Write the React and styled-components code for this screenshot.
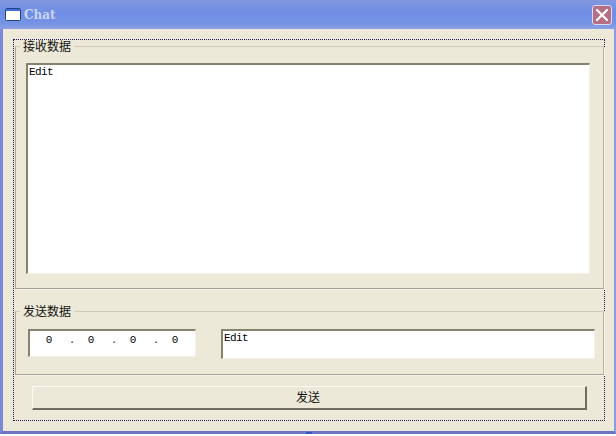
import React from 'react';
import styled, { createGlobalStyle } from 'styled-components';

const GlobalStyle = createGlobalStyle`
  html, body { margin: 0; padding: 0; background: #fff; }
  * { box-sizing: border-box; }
`
const Window = styled.div`
  position: relative;
  width: 616px;
  height: 434px;
  display: flex;
  flex-direction: column;
  background: #ece9d8;
  border-left: 3px solid #7b88d8;
  border-right: 2px solid #8a9be0;
  border-bottom: 3px solid #6d74c4;
  font-family: "Noto Sans CJK SC", "Liberation Sans", sans-serif;
  font-size: 12px;
  color: #111;
`
const TitleBar = styled.div`
  flex: none;
  height: 29px;
  margin: 0 -2px 0 -3px;
  padding: 0 4px 0 5px;
  display: flex;
  align-items: center;
  gap: 3px;
  background: linear-gradient(180deg, #8497dc 0%, #7c95e2 12%, #6f8de4 45%, #7593e4 80%, #8ba0e4 100%);
`
const TitleText = styled.span`
  flex: 1;
  font-family: "DejaVu Serif", serif;
  font-weight: 700;
  font-size: 12px;
  color: #c9d6f5;
`
const CloseButton = styled.button`
  width: 20px;
  height: 20px;
  padding: 0;
  display: flex;
  align-items: center;
  justify-content: center;
  background: #b56f84;
  border: 1px solid #d8dcf0;
  border-radius: 3px;
`
const Body = styled.div`
  flex: 1;
  padding: 10px 8px 0 10px;
`
const Frame = styled.div`
  width: 592px;
  height: 382px;
  padding: 0 0 0 1px;
  border: 1px dotted #1a1a50;
`
const Group = styled.fieldset`
  margin: ${p => p.$top || 0}px 0 0 0;
  padding: 0;
  width: 589px;
  border: 1px solid #d0cdbc;
  border-bottom-color: #a3a190;
  border-right-color: #b5b3a2;
  border-left-color: #a8a696;
  box-shadow: 1px 1px 0 #f5f4ec;
`
const Legend = styled.legend`
  margin-left: 4px;
  padding: 0 3px;
  font-size: 12px;
  line-height: 12px;
  font-weight: 400;
`
const GroupBody = styled.div`
  padding: ${p => p.$padding};
`
const Sunken = styled.div`
  background: #fff;
  border-style: solid;
  border-width: 2px 1px 1px 2px;
  border-color: #85826f #f4f2e8 #f4f2e8 #85826f;
`
const EditBox = styled(Sunken)`
  height: ${p => p.$height}px;
  flex: ${p => p.$grow ? 1 : 'none'};
  padding: 1px 1px 0;
  font-family: "Liberation Mono", monospace;
  font-size: 11px;
  letter-spacing: -0.6px;
  line-height: 12px;
  color: #000;
`
const SendRow = styled.div`
  display: flex;
  align-items: flex-start;
  gap: 25px;
`
const IpBox = styled(Sunken)`
  width: 168px;
  height: 28px;
  flex: none;
  display: flex;
  align-items: center;
  padding: 0 0 7px 7px;
  font-family: "Liberation Mono", monospace;
  font-size: 11px;
  color: #000;
`
const Octet = styled.span`
  width: 24px;
  text-align: center;
`
const Dot = styled.span`
  width: 18px;
  padding-left: 4px;
  text-align: center;
  color: #333;
`
const SendButton = styled.button`
  display: block;
  width: 555px;
  height: 24px;
  margin: 11px 0 0 17px;
  padding: 0 2px 2px 0;
  background: #ece9d8;
  border-style: solid;
  border-width: 1px 2px 2px 1px;
  border-color: #fbfaf4 #6f6d60 #6f6d60 #fbfaf4;
  font-family: "Noto Sans CJK SC", sans-serif;
  font-size: 12px;
  color: #111;
`
const SizeGrip = styled.div`
  position: absolute;
  left: 303px;
  bottom: -5px;
  z-index: 2;
  width: 6px;
  height: 4px;
  background: #3557c4;
`

const octets = [0, 0, 0, 0];

function App() {
  return (
    <Window>
      <GlobalStyle />
      <TitleBar>
        <svg width="16" height="13" viewBox="0 0 16 13">
          <rect x="0.5" y="0.5" width="15" height="12" rx="1" fill="#fff" stroke="#24408c" />
          <rect x="1" y="1" width="14" height="2" fill="#3f6fd8" />
        </svg>
        <TitleText>Chat</TitleText>
        <CloseButton aria-label="close">
          <svg width="14" height="14" viewBox="0 0 14 14">
            <path d="M2 2 L12 12 M12 2 L2 12" stroke="#fff" strokeWidth="2.2" strokeLinecap="round" />
          </svg>
        </CloseButton>
      </TitleBar>
      <Body>
        <Frame>
          <Group>
            <Legend>接收数据</Legend>
            <GroupBody $padding="11px 13px 14px 10px">
              <EditBox $height={211}>Edit</EditBox>
            </GroupBody>
          </Group>
          <Group $top={16}>
            <Legend>发送数据</Legend>
            <GroupBody $padding="12px 8px 15px 12px">
              <SendRow>
                <IpBox>
                  {octets.map((value, i) => (
                    <React.Fragment key={i}>
                      <Octet>{value}</Octet>
                      {i < 3 && <Dot>.</Dot>}
                    </React.Fragment>
                  ))}
                </IpBox>
                <EditBox $height={30} $grow>Edit</EditBox>
              </SendRow>
            </GroupBody>
          </Group>
          <SendButton>发送</SendButton>
        </Frame>
      </Body>
      <SizeGrip />
    </Window>
  );
}

export default App;
